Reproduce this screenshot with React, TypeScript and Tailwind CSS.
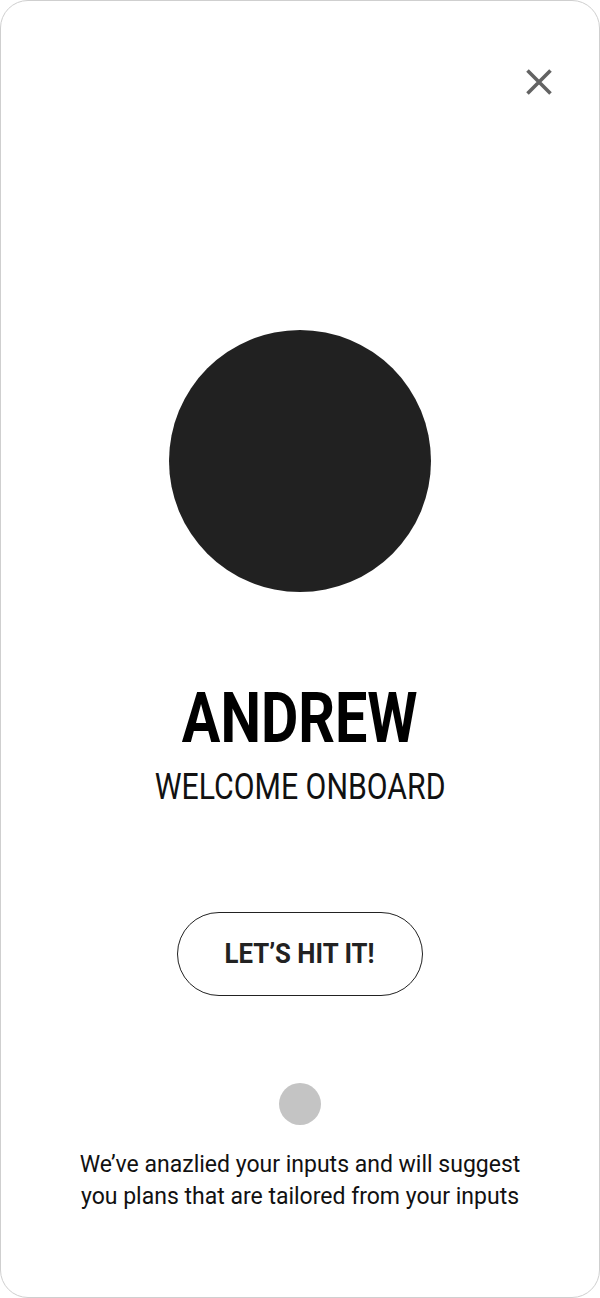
export default function App() {
  return (
    <div className="w-[600px] h-[1298px] bg-white">
      <div className="w-full h-full flex flex-col items-center rounded-[28px] border border-[#cfcfcf] bg-white font-['Roboto',sans-serif]">
        <div className="w-full flex justify-end pt-[68px] pr-[47px]">
          <button type="button" aria-label="Close" className="w-[26px] h-[26px]">
            <svg width="26" height="26" viewBox="0 0 26 26" fill="none">
              <path d="M1.5 1.5L24.5 24.5M24.5 1.5L1.5 24.5" stroke="#636363" strokeWidth="3.6" />
            </svg>
          </button>
        </div>

        <div className="mt-[235px] w-[262px] h-[262px] rounded-full bg-[#212121]" />

        <h1 className="mt-[91px] text-[70px] leading-none font-bold text-black scale-x-[0.82]">
          ANDREW
        </h1>
        <p className="mt-[16px] text-[36px] leading-none text-[#111] scale-x-[0.84]">
          WELCOME ONBOARD
        </p>

        <button
          type="button"
          className="mt-[107px] w-[246px] h-[84px] rounded-full border-[1.5px] border-[#222] flex items-center justify-center"
        >
          <span className="text-[28px] leading-none font-bold text-[#222] scale-x-[0.92]">
            LET’S HIT IT!
          </span>
        </button>

        <div className="mt-[87px] w-[42px] h-[42px] rounded-full bg-[#c4c4c4]" />

        <p className="mt-[24px] text-[23px] leading-[32px] text-[#111] text-center">
          We’ve anazlied your inputs and will suggest
          <br />
          you plans that are tailored from your inputs
        </p>
      </div>
    </div>
  )
}
